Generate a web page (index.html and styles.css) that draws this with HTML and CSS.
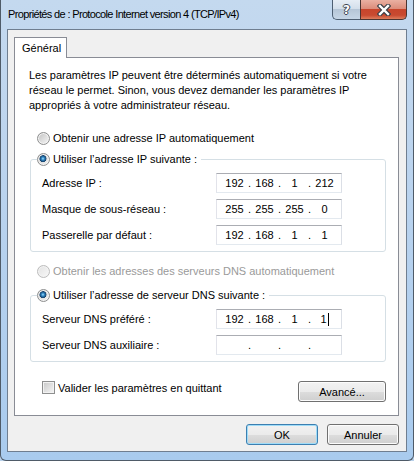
FILE: index.html
```html
<!DOCTYPE html>
<html lang="fr">
<head>
    <meta charset="UTF-8">
    <title>Propriétés de : Protocole Internet version 4 (TCP/IPv4)</title>
    <link rel="stylesheet" href="styles.css">
</head>
<body>
    <div class="window">
        <div class="titlebar">
            <span class="title">Propriétés de : Protocole Internet version 4 (TCP/IPv4)</span>
            <div class="caption-buttons">
                <div class="cap help"><span>?</span></div>
                <div class="cap close">
                    <svg width="14" height="12" viewBox="0 0 14 12">
                        <path d="M3 2 L11 10 M11 2 L3 10" stroke="#3a3f47" stroke-width="4.6" stroke-linecap="square"/>
                        <path d="M3 2 L11 10 M11 2 L3 10" stroke="#fff" stroke-width="2.4" stroke-linecap="square"/>
                    </svg>
                </div>
            </div>
        </div>

        <div class="client">
            <div class="tabs">
                <div class="tab">Général</div>
            </div>
            <div class="panel">
                <p class="intro">Les paramètres IP peuvent être déterminés automatiquement si votre<br>réseau le permet. Sinon, vous devez demander les paramètres IP<br>appropriés à votre administrateur réseau.</p>

                <div class="choice first"><span class="radio"></span>Obtenir une adresse IP automatiquement</div>

                <fieldset class="group">
                    <legend><span class="choice"><span class="radio on"></span>Utiliser l’adresse IP suivante :</span></legend>
                    <div class="row">
                        <span>Adresse IP :</span>
                        <div class="ipbox"><span>192</span><i>.</i><span>168</span><i>.</i><span>1</span><i>.</i><span>212</span></div>
                    </div>
                    <div class="row">
                        <span>Masque de sous-réseau :</span>
                        <div class="ipbox"><span>255</span><i>.</i><span>255</span><i>.</i><span>255</span><i>.</i><span>0</span></div>
                    </div>
                    <div class="row">
                        <span>Passerelle par défaut :</span>
                        <div class="ipbox"><span>192</span><i>.</i><span>168</span><i>.</i><span>1</span><i>.</i><span>1</span></div>
                    </div>
                </fieldset>

                <div class="choice disabled"><span class="radio off"></span>Obtenir les adresses des serveurs DNS automatiquement</div>

                <fieldset class="group dns">
                    <legend><span class="choice"><span class="radio on"></span>Utiliser l’adresse de serveur DNS suivante :</span></legend>
                    <div class="row">
                        <span>Serveur DNS préféré :</span>
                        <div class="ipbox"><span>192</span><i>.</i><span>168</span><i>.</i><span>1</span><i>.</i><span>1<b class="caret"></b></span></div>
                    </div>
                    <div class="row">
                        <span>Serveur DNS auxiliaire :</span>
                        <div class="ipbox"><span></span><i>.</i><span></span><i>.</i><span></span><i>.</i><span></span></div>
                    </div>
                </fieldset>

                <div class="bottom-row">
                    <div class="checkline"><span class="check"></span>Valider les paramètres en quittant</div>
                    <button class="btn advanced">Avancé...</button>
                </div>
            </div>

            <div class="dialog-buttons">
                <button class="btn default">OK</button>
                <button class="btn">Annuler</button>
            </div>
        </div>
    </div>
</body>
</html>
```

FILE: styles.css
```css
* {
    box-sizing: border-box;
}

body {
    margin: 0;
    font-family: "Liberation Sans", Arial, sans-serif;
    font-size: 11px;
    color: #000;
    background-color: #b9d1ea;
}

/* Cadre de la fenêtre */
.window {
    width: 414px;
    height: 461px;
    display: flex;
    flex-direction: column;
    padding: 0 6px 8px;
    border: 1px solid #4f5b68;
    border-top: none;
    border-radius: 0 0 6px 6px;
    background: linear-gradient(180deg, #c4d9ef 0%, #bcd4ee 35%, #a9cbee 100%);
}

.titlebar {
    height: 29px;
    display: flex;
    justify-content: space-between;
    align-items: flex-start;
    flex: none;
}

.title {
    padding-left: 1px;
    line-height: 29px;
    font-size: 11px;
    letter-spacing: -0.65px;
}

.caption-buttons {
    display: flex;
}

.cap {
    height: 20px;
    display: flex;
    align-items: center;
    justify-content: center;
    border: 1px solid #4e5f72;
    border-top: none;
}

.help {
    width: 28px;
    border-right: none;
    border-radius: 0 0 0 5px;
    background: linear-gradient(180deg, #e6edf5 0%, #d4dfeb 45%, #b6c6d7 50%, #c6d6e6 100%);
}

.help span {
    color: #fff;
    font-family: "DejaVu Sans", sans-serif;
    font-weight: bold;
    font-size: 12px;
    text-shadow: 1px 0 #3a4450, -1px 0 #3a4450, 0 1px #3a4450, 0 -1px #3a4450;
}

.close {
    width: 47px;
    border-radius: 0 0 5px 0;
    border-color: #4a3532;
    background: linear-gradient(180deg, #eab0a2 0%, #dc8d7b 45%, #c7452c 50%, #c84a30 80%, #dd7d5d 100%);
}

/* Zone cliente */
.client {
    flex: 1;
    display: flex;
    flex-direction: column;
    padding: 7px 7px 0 6px;
    background-color: #f0f0f0;
    border: 1px solid #6f7e90;
}

.tabs {
    display: flex;
}

.tab {
    position: relative;
    z-index: 1;
    width: 53px;
    height: 21px;
    margin-bottom: -1px;
    padding-left: 7px;
    line-height: 20px;
    background-color: #fff;
    border: 1px solid #898c95;
    border-bottom: none;
}

.panel {
    padding: 0 12px 13px 14px;
    background-color: #fff;
    border: 1px solid #898c95;
}

.intro {
    margin: 10px 0 0;
    line-height: 15px;
}

.choice {
    height: 20px;
    display: flex;
    align-items: center;
    gap: 3px;
    padding-left: 8px;
}

.choice.first {
    margin-top: 15px;
}

.choice.disabled {
    margin-top: 9px;
    color: #9a9a9a;
}

.radio {
    flex: none;
    width: 13px;
    height: 13px;
    border-radius: 50%;
    border: 1px solid #8e8f8f;
    background: linear-gradient(135deg, #c2c2c2, #f7f7f7);
    box-shadow: inset 0 0 0 1px #f3f3f3;
}

.radio.on {
    background:
        radial-gradient(circle at 45% 42%, #a6e0fb 0, #2f86c4 1.5px, #15406a 3.2px, transparent 3.8px),
        linear-gradient(135deg, #c2c2c2, #f7f7f7);
}

.radio.off {
    border-color: #bcbcbc;
    background: linear-gradient(135deg, #e2e2e2, #f8f8f8);
}

/* Cadres de groupe */
.group {
    margin: 1px 0 0 1px;
    padding: 4px 0 6px 0;
    border: 1px solid #d5dfe5;
    border-radius: 3px;
}

.group.dns {
    margin-top: 4px;
}

.group legend {
    margin-left: 6px;
    padding: 0 4px 0 0;
}

.group legend .choice {
    padding-left: 0;
}

.row {
    display: grid;
    grid-template-columns: 174px 126px;
    align-items: center;
    height: 20px;
    padding-left: 11px;
}

.row + .row {
    margin-top: 6px;
}

.ipbox {
    height: 20px;
    display: grid;
    grid-template-columns: 23px 7px 23px 7px 23px 7px 23px;
    align-items: center;
    padding-left: 6px;
    text-align: center;
    background-color: #fff;
    border: 1px solid #dbdfe6;
    border-top-color: #abadb3;
    border-left-color: #e2e3ea;
    border-bottom-color: #e3e9ef;
}

.ipbox i {
    font-style: normal;
}

.caret {
    display: inline-block;
    width: 1px;
    height: 13px;
    margin-left: 1px;
    vertical-align: -3px;
    background-color: #000;
}

.bottom-row {
    margin-top: 19px;
    display: flex;
    justify-content: space-between;
    align-items: flex-start;
}

.checkline {
    height: 13px;
    display: flex;
    align-items: center;
    gap: 3px;
    margin-left: 13px;
}

.check {
    width: 13px;
    height: 13px;
    border: 1px solid #8e8f8f;
    background: linear-gradient(135deg, #c8c8c8, #f6f6f6);
    box-shadow: inset 0 0 0 1px #f2f2f2;
}

/* Boutons */
.btn {
    height: 21px;
    padding: 0;
    font-family: inherit;
    font-size: 11px;
    color: #000;
    border: 1px solid #707070;
    border-radius: 3px;
    background: linear-gradient(180deg, #f2f2f2 0%, #ebebeb 50%, #dddddd 51%, #cfcfcf 100%);
    box-shadow: inset 0 0 0 1px #fcfcfc;
}

.btn.advanced {
    width: 88px;
}

.dialog-buttons {
    margin-top: 8px;
    display: flex;
    justify-content: flex-end;
    gap: 9px;
}

.dialog-buttons .btn {
    width: 72px;
}

.btn.default {
    border-color: #3c7fb1;
    box-shadow: inset 0 0 0 1px #9fdcf8;
}
```
